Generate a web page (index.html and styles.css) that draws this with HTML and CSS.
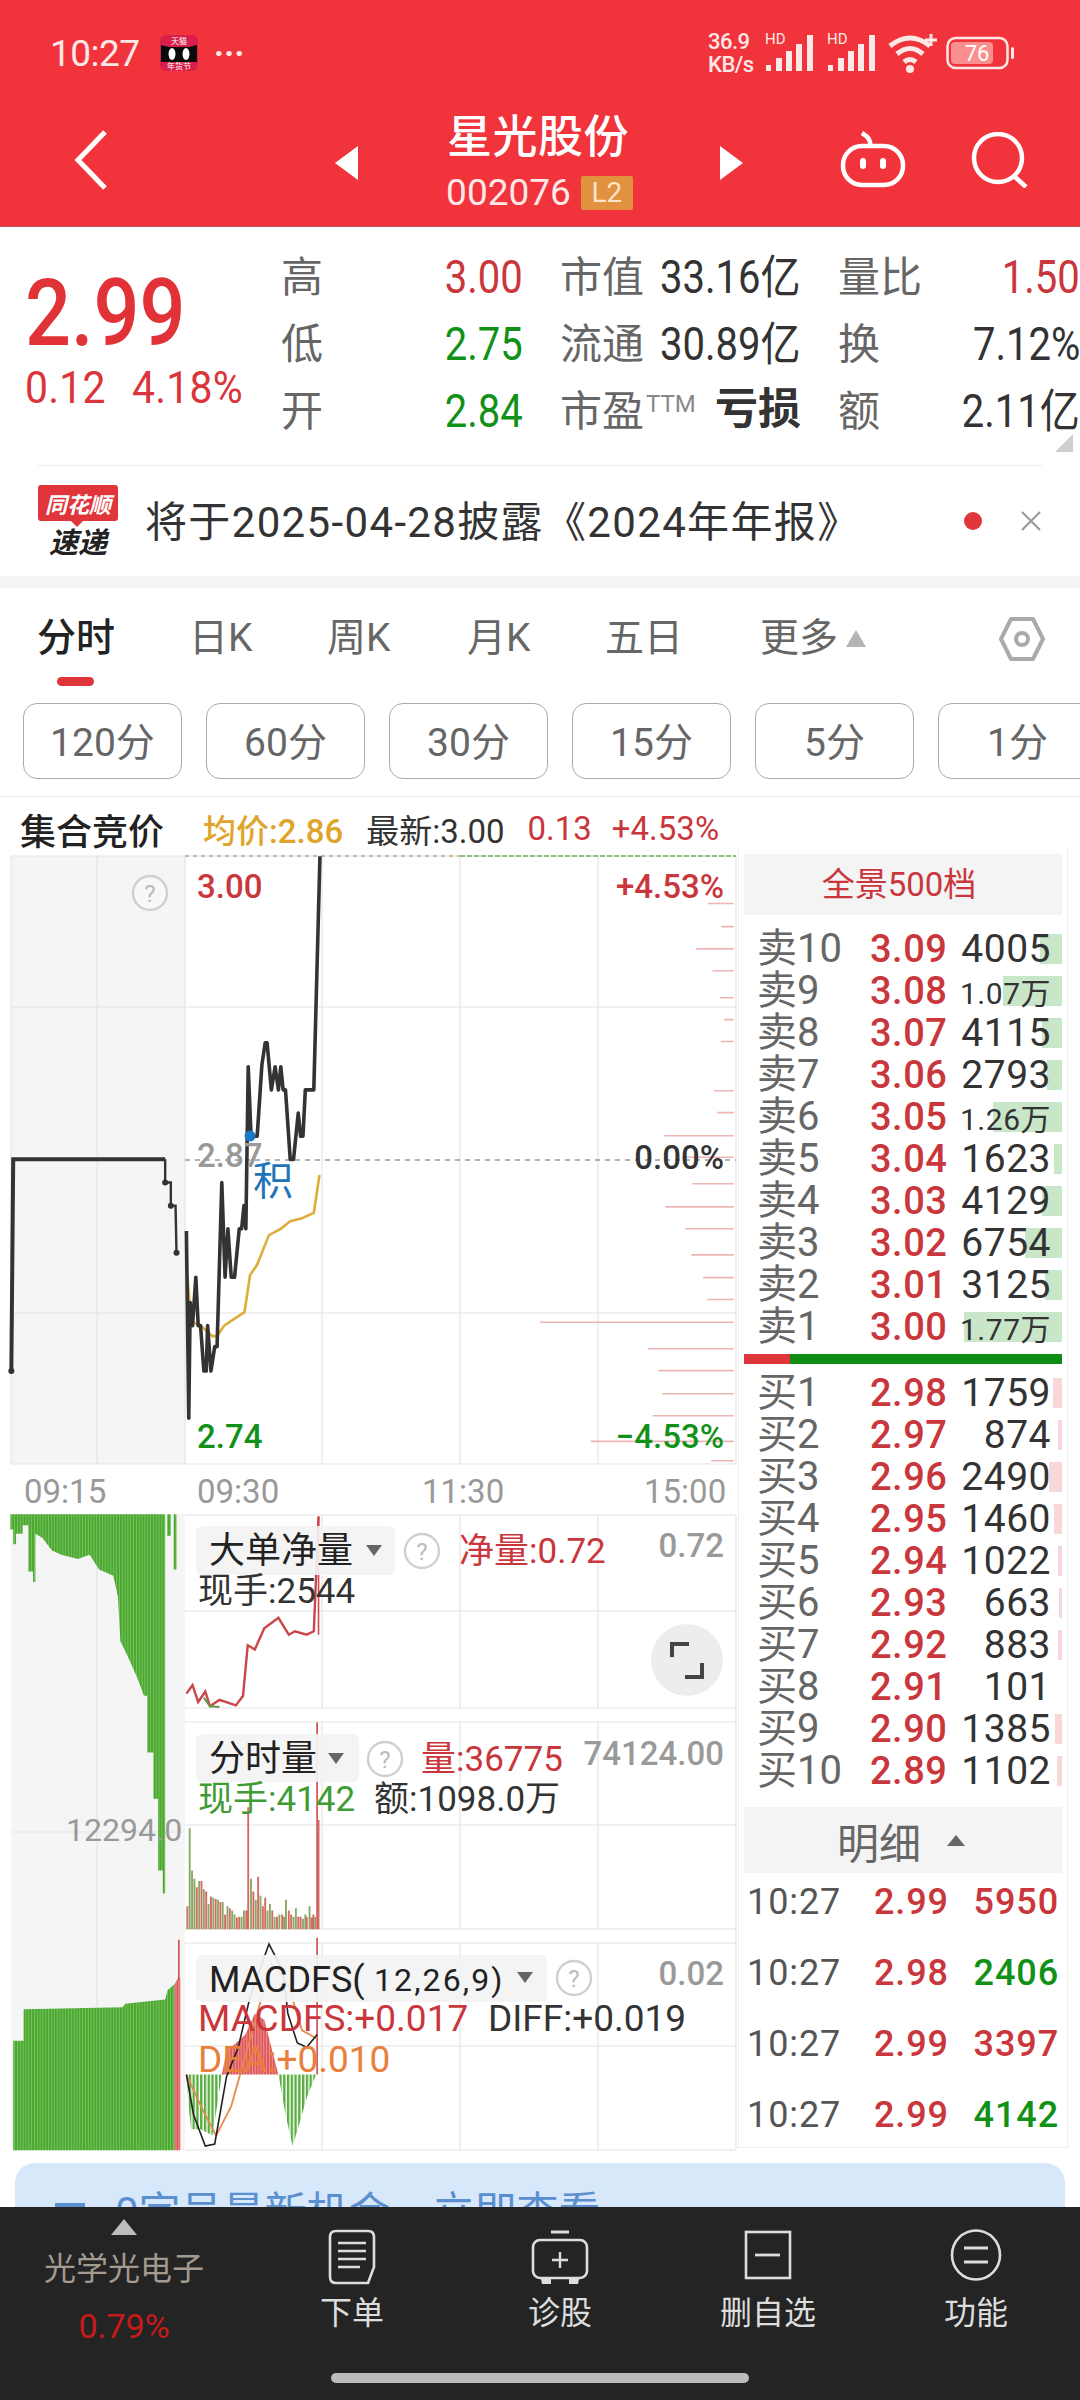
FILE: index.html
```html
<!DOCTYPE html>
<html lang="zh-CN">
<head>
<meta charset="utf-8">
<title>星光股份</title>
<link rel="stylesheet" href="styles.css">
</head>
<body>
<div class="page">
  <header class="top">
    <div class="status">
      <span class="clock">10:27</span>
      <svg class="tmall" viewBox="0 0 38 36">
        <rect width="38" height="36" rx="6" fill="#d81e4a"/>
        <text class="tm-t" x="19" y="9" text-anchor="middle">天猫</text>
        <path d="M1 10l8 2h20l8-2v17H1z" fill="#0a0a0a"/>
        <ellipse cx="12" cy="19" rx="3.5" ry="6" fill="#fff"/><ellipse cx="26" cy="19" rx="3.5" ry="6" fill="#fff"/>
        <text class="tm-t" x="19" y="34" text-anchor="middle">年货节</text>
      </svg>
      <span class="dots">···</span>
      <div class="status-right">
        <span class="speed">36.9<br>KB/s</span>
        <svg class="sig" viewBox="0 0 52 42"><text class="hd" x="1" y="12">HD</text><g fill="#fde8e8"><rect x="2" y="33" width="5" height="6"/><rect x="12" y="26" width="6" height="13"/><rect x="22" y="19" width="6" height="20"/><rect x="32" y="12" width="6" height="27"/><rect x="43" y="3" width="6" height="36"/></g></svg>
        <svg class="sig" viewBox="0 0 52 42"><text class="hd" x="1" y="12">HD</text><g fill="#fde8e8"><rect x="2" y="33" width="5" height="6"/><rect x="12" y="26" width="6" height="13"/><rect x="22" y="19" width="6" height="20"/><rect x="32" y="12" width="6" height="27"/><rect x="43" y="3" width="6" height="36"/></g></svg>
        <svg class="wifi" viewBox="0 0 50 42"><g fill="none" stroke="#fde8e8" stroke-width="5"><path d="M2 14q20-16 40 0"/><path d="M9 22q13-11 26 0"/><path d="M16 30q6-5 12 0"/></g><circle cx="22" cy="37" r="4" fill="#fde8e8"/><path d="M43 2v12M37 8h12" stroke="#fde8e8" stroke-width="3"/></svg>
        <svg class="batt" viewBox="0 0 70 36"><rect x="1.5" y="3" width="60" height="30" rx="8" fill="none" stroke="#fde8e8" stroke-width="2.5"/><rect x="5" y="7" width="42" height="22" rx="4" fill="#fb8f8f"/><rect x="65" y="12" width="3" height="12" rx="1.5" fill="#fde8e8"/><text class="batt-t" x="31" y="26" text-anchor="middle">76</text></svg>
      </div>
    </div>
    <nav class="nav">
      <svg class="back" viewBox="0 0 34 60"><path d="M31 2L4 30l27 28" fill="none" stroke="#fff" stroke-width="5"/></svg>
      <div class="switcher">
        <span class="tri-l"></span>
        <div class="title-box">
          <div class="title">星光股份</div>
          <div class="code"><span>002076</span><span class="l2">L2</span></div>
        </div>
        <span class="tri-r"></span>
      </div>
      <svg class="bot" viewBox="0 0 66 58"><g fill="none" stroke="#fff" stroke-width="4.5"><rect x="3" y="16" width="60" height="39" rx="19"/><path d="M30 16q2-7-8-13"/></g><rect x="20" y="28" width="6" height="11" rx="3" fill="#fff"/><rect x="40" y="28" width="6" height="11" rx="3" fill="#fff"/></svg>
      <svg class="search" viewBox="0 0 58 56"><circle cx="27" cy="26" r="24" fill="none" stroke="#fff" stroke-width="4.5"/><path d="M43 44l12 11" stroke="#fff" stroke-width="4.5"/></svg>
    </nav>
  </header>

  <section class="quote">
    <div class="price-box">
      <div class="price">2.99</div>
      <div class="change"><span>0.12</span><span>4.18%</span></div>
    </div>
    <div class="stat-grid">
      <div class="stat"><span class="lbl">高</span><span class="num red">3.00</span></div>
      <div class="stat"><span class="lbl">市值</span><span class="num">33.16亿</span></div>
      <div class="stat"><span class="lbl">量比</span><span class="num red">1.50</span></div>
      <div class="stat"><span class="lbl">低</span><span class="num green">2.75</span></div>
      <div class="stat"><span class="lbl">流通</span><span class="num">30.89亿</span></div>
      <div class="stat"><span class="lbl">换</span><span class="num">7.12%</span></div>
      <div class="stat"><span class="lbl">开</span><span class="num green">2.84</span></div>
      <div class="stat"><span class="lbl">市盈<sup class="ttm">TTM</sup></span><span class="bold">亏损</span></div>
      <div class="stat"><span class="lbl">额</span><span class="num">2.11亿</span></div>
    </div>
    <span class="corner"></span>
  </section>

  <section class="ticker">
    <div class="logo"><span class="logo-top">同花顺</span><span class="logo-bot">速递</span></div>
    <span class="ticker-text">将于2025-04-28披露《2024年年报》</span>
    <span class="dot"></span>
    <svg class="close" viewBox="0 0 22 22"><path d="M2 2l18 18M20 2L2 20" stroke="#999" stroke-width="2"/></svg>
  </section>
  <div class="band"></div>

  <section class="tabs">
    <span class="tab active">分时</span>
    <span class="tab">日K</span>
    <span class="tab">周K</span>
    <span class="tab">月K</span>
    <span class="tab">五日</span>
    <span class="tab more">更多<i class="up"></i></span>
    <svg class="hex" viewBox="0 0 46 46"><path d="M12 3h22l10 20-10 20H12L2 23z" fill="none" stroke="#aaa" stroke-width="4" stroke-linejoin="round"/><circle cx="23" cy="23" r="6" fill="none" stroke="#aaa" stroke-width="4"/></svg>
  </section>

  <section class="periods">
    <span class="chip">120分</span><span class="chip">60分</span><span class="chip">30分</span><span class="chip">15分</span><span class="chip">5分</span><span class="chip">1分</span>
  </section>

  <section class="info">
    <span class="info-title">集合竞价</span>
    <span class="gold">均价:2.86</span>
    <span class="dark">最新:3.00</span>
    <span class="red">0.13</span>
    <span class="red">+4.53%</span>
  </section>

  <section class="board">
    <div class="charts">
      <svg class="main-chart" viewBox="0 850 740 620">
        <defs>
          <pattern id="gs" width="6" height="10" patternUnits="userSpaceOnUse"><rect width="6" height="10" fill="#4aa82e"/><rect width="1.4" height="10" fill="#8fcf7c"/></pattern>
          <pattern id="gm" width="8" height="10" patternUnits="userSpaceOnUse"><rect width="8" height="10" fill="#fff"/><rect width="5" height="10" fill="#57ad3d"/></pattern>
          <pattern id="rs" width="6" height="10" patternUnits="userSpaceOnUse"><rect width="6" height="10" fill="#e0575a"/><rect width="1.4" height="10" fill="#f2b0b0"/></pattern>
        </defs>
        <rect class="pre" x="11" y="856" width="174" height="608"/>
        <path class="grid" d="M11 856H736M11 1007H736M11 1313H736M11 1464H736M11 856V1464M97 856V1464M185 856V1464M322 856V1464M460 856V1464M598 856V1464M736 856V1464"/>
        <path class="top-dash" d="M185 856H460"/><path class="top-dash-g" d="M460 856H736"/>
        <path class="mid-dash" d="M185 1160H736"/>
        <g transform="translate(0 850) scale(.4719 .4209)">
          <path class="vol" d="M1500 127H1555M1528 182H1555M1475 235H1555M1510 287H1555M1525 351H1555M1535 403H1555M1528 455H1555M1513 572H1555M1520 624H1555M1408 679H1555M1445 730H1555M1467 793H1555M1410 848H1555M1452 900H1555M1465 962H1555M1490 1016H1555M1498 1068H1555M1145 1122H1555M1373 1185H1555M1395 1237H1555M1403 1292H1555M1383 1344H1555M1252 1405H1555M1507 1451H1555"/>
          <polyline class="avg" points="397,1010 405,1120 425,1130 450,1155 460,1155 475,1130 495,1115 518,1098 530,1010 545,985 570,915 595,900 615,882 640,875 665,862 677,772"/>
          <polyline class="pre-line" points="24,1238 28,735 350,735"/>
          <polyline class="pre-line2" points="350,735 350,790 362,790 362,845 372,845 374,957"/>
          <path class="pre-dots" d="M24 1238h.1M374 957h.1M350 790h.1M362 845h.1"/>
          <polyline class="px" points="395,905 400,1350 403,1075 408,1130 415,1015 420,1130 425,1130 432,1238 437,1238 440,1130 447,1238 455,1180 460,1180 470,790 477,1015 483,900 490,1015 497,1015 507,900 512,900 517,845 521,900 526,515 532,680 545,680 555,510 562,458 566,458 575,570 583,515 590,570 595,515 600,570 605,570 615,735 622,735 627,680 632,625 637,680 642,680 647,570 665,570 678,15"/>
        </g>
        <circle class="qm-c" cx="150" cy="893" r="17"/><text class="qm" x="150" y="894">?</text>
        <circle class="blue-dot" cx="250" cy="1136" r="5.5"/>
        <text class="t-blue" x="253" y="1178">积</text>
        <text class="t-axis c-red" x="197" y="886">3.00</text>
        <text class="t-axis c-gray" x="197" y="1155">2.87</text>
        <text class="t-axis c-green" x="197" y="1436">2.74</text>
        <text class="t-axis c-red end" x="724" y="886">+4.53%</text>
        <text class="t-axis c-dark end" x="724" y="1157">0.00%</text>
        <text class="t-axis c-green end" x="724" y="1436">−4.53%</text>
      </svg>
      <div class="times"><span>09:15</span><span>09:30</span><span>11:30</span><span>15:00</span></div>
      <svg class="sub-chart" viewBox="0 1512 740 648">
        <rect class="pre" x="11" y="1514" width="174" height="636"/>
        <path class="grid" d="M185 1515H736M185 1611H736M185 1708H736M185 1722H736M185 1825H736M185 1929H736M185 1943H736M185 2046H736M185 2150H736M322 1515V1708M460 1515V1708M598 1515V1708M322 1722V1929M460 1722V1929M598 1722V1929M322 1943V2150M460 1943V2150M598 1943V2150M97 1514V2150M736 1515V2150M11 1832H185"/>
        <g transform="translate(0 1500) scale(.4719 .4209)">
          <polygon fill="url(#gs)" points="22,34 22,70 28,70 28,105 34,105 34,80 48,80 48,60 60,60 60,170 70,170 70,195 75,195 75,80 90,90 110,120 130,130 165,140 190,130 210,165 240,180 250,230 255,335 270,370 290,420 305,465 312,465 312,600 325,600 325,710 335,710 335,880 345,880 345,935 350,935 350,34"/>
          <polygon fill="url(#gs)" points="354,34 354,85 362,85 362,34"/>
          <polygon fill="url(#gs)" points="368,34 368,165 374,165 374,34"/>
          <polygon fill="url(#gs)" points="28,1545 28,1285 50,1285 50,1210 260,1205 265,1197 350,1187 355,1165 370,1150 370,1545"/>
          <polygon fill="url(#rs)" points="370,1545 370,1150 378,1135 382,1135 382,1545"/>
          <path class="red-thin" d="M379 1045V1140M675 38V320M672 528V1020M672 1040V1365"/>
          <polyline class="net-red" points="395,460 408,440 420,480 435,455 445,490 465,475 500,488 515,465 525,345 540,355 560,305 590,280 612,320 625,312 650,320 665,312 675,40"/>
          <polyline class="net-green" points="432,470 445,490 465,492"/>
          <path class="bar-g" d="M402 1020V780M407 1020V880M412 1020V900M422 1020V905M432 1020V925M442 1020V960M452 1020V945M462 1020V950M472 1020V955M482 1020V965M492 1020V975M497 1020V985M512 1020V990M517 1020V975M532 1020V900M542 1020V950M552 1020V940M567 1020V975M572 1020V960M582 1020V990M592 1020V985M602 1020V990M606 1020V950M622 1020V990M627 1020V970M642 1020V995M647 1020V985M656 1020V965M668 1020V990"/>
          <path class="bar-r" d="M397 1020V965M417 1020V920M427 1020V905M437 1020V930M447 1020V942M457 1020V948M467 1020V955M477 1020V985M487 1020V970M502 1020V992M507 1020V990M522 1020V975M526 1020V730M537 1020V930M547 1020V895M557 1020V965M562 1020V945M577 1020V975M587 1020V990M598 1020V985M612 1020V975M617 1020V985M632 1020V990M637 1020V990M650 1020V990M660 1020V992M664 1020V985M675 1020V760"/>
          <polygon fill="url(#gm)" points="395,1365 470,1365 460,1440 450,1510 425,1495 405,1495 398,1420"/>
          <polygon fill="url(#rs)" points="470,1365 480,1310 500,1290 520,1270 540,1220 560,1235 575,1300 590,1365"/>
          <polygon fill="url(#gm)" points="590,1365 670,1365 650,1420 635,1480 620,1535 605,1460"/>
          <polyline class="macd-o" points="395,1365 430,1450 458,1510 490,1440 520,1320 550,1200 575,1100 610,1150 640,1260 672,1280"/>
          <polyline class="macd-k" points="395,1365 410,1460 435,1535 455,1530 480,1370 505,1300 530,1180 570,1055 600,1120 610,1220 630,1290 650,1300 672,1270"/>
        </g>
        <text class="t-side" x="66" y="1830">12294.0</text>

        <rect class="pill" x="196" y="1526" width="199" height="49" rx="6"/>
        <text class="t-lab" x="209" y="1551">大单净量</text>
        <path class="caret" d="M366 1545h16l-8 11z"/>
        <circle class="qm-c" cx="422" cy="1551" r="17"/><text class="qm" x="422" y="1552">?</text>
        <text class="t-val c-red" x="459" y="1551">净量:0.72</text>
        <text class="t-axis c-gray end" x="724" y="1545">0.72</text>
        <text class="t-sm c-dark" x="198" y="1591">现手:2544</text>
        <ellipse class="fs-bg" cx="687" cy="1660" rx="36" ry="36"/>
        <path class="fs" d="M672 1657v-13h17M702 1663v14h-17"/>

        <rect class="pill" x="196" y="1734" width="163" height="48" rx="6"/>
        <text class="t-lab" x="209" y="1759">分时量</text>
        <path class="caret" d="M328 1753h16l-8 11z"/>
        <circle class="qm-c" cx="385" cy="1759" r="17"/><text class="qm" x="385" y="1760">?</text>
        <text class="t-val c-red" x="421" y="1759">量:36775</text>
        <text class="t-axis c-gray end" x="724" y="1753">74124.00</text>
        <text class="t-sm c-gr2" x="198" y="1799">现手:4142</text>
        <text class="t-sm c-dark" x="374" y="1799">额:1098.0万</text>

        <rect class="pill" x="196" y="1955" width="351" height="47" rx="6"/>
        <text class="t-lab" x="209" y="1980">MACDFS(</text>
        <text class="t-lab-s" x="374" y="1980">12,26,9)</text>
        <path class="caret" d="M517 1972h16l-8 11z"/>
        <circle class="qm-c" cx="574" cy="1978" r="17"/><text class="qm" x="574" y="1979">?</text>
        <text class="t-axis c-gray end" x="724" y="1973">0.02</text>
        <text class="t-md c-red" x="198" y="2018">MACDFS:+0.017</text>
        <text class="t-md c-dark" x="488" y="2018">DIFF:+0.019</text>
        <text class="t-md c-orange" x="198" y="2059">DEA:+0.010</text>
      </svg>
    </div>

    <aside class="book">
      <div class="book-head">全景500档</div>
      <div class="levels sell">
        <div class="lv"><span class="lv-l">卖10</span><span class="lv-p">3.09</span><span class="lv-q">4005</span><i class="b-g b22"></i></div>
        <div class="lv"><span class="lv-l">卖9</span><span class="lv-p">3.08</span><span class="lv-q small">1.07万</span><i class="b-g b59"></i></div>
        <div class="lv"><span class="lv-l">卖8</span><span class="lv-p">3.07</span><span class="lv-q">4115</span><i class="b-g b20"></i></div>
        <div class="lv"><span class="lv-l">卖7</span><span class="lv-p">3.06</span><span class="lv-q">2793</span><i class="b-g b15"></i></div>
        <div class="lv"><span class="lv-l">卖6</span><span class="lv-p">3.05</span><span class="lv-q small">1.26万</span><i class="b-g b69"></i></div>
        <div class="lv"><span class="lv-l">卖5</span><span class="lv-p">3.04</span><span class="lv-q">1623</span><i class="b-g b8"></i></div>
        <div class="lv"><span class="lv-l">卖4</span><span class="lv-p">3.03</span><span class="lv-q">4129</span><i class="b-g b20"></i></div>
        <div class="lv"><span class="lv-l">卖3</span><span class="lv-p">3.02</span><span class="lv-q">6754</span><i class="b-g b37"></i></div>
        <div class="lv"><span class="lv-l">卖2</span><span class="lv-p">3.01</span><span class="lv-q">3125</span><i class="b-g b17"></i></div>
        <div class="lv"><span class="lv-l">卖1</span><span class="lv-p">3.00</span><span class="lv-q small">1.77万</span><i class="b-g b98"></i></div>
      </div>
      <div class="ratio"><span class="ratio-r"></span></div>
      <div class="levels buy">
        <div class="lv"><span class="lv-l">买1</span><span class="lv-p">2.98</span><span class="lv-q">1759</span><i class="b-r b9"></i></div>
        <div class="lv"><span class="lv-l">买2</span><span class="lv-p">2.97</span><span class="lv-q">874</span><i class="b-r b4"></i></div>
        <div class="lv"><span class="lv-l">买3</span><span class="lv-p">2.96</span><span class="lv-q">2490</span><i class="b-r b13"></i></div>
        <div class="lv"><span class="lv-l">买4</span><span class="lv-p">2.95</span><span class="lv-q">1460</span><i class="b-r b8"></i></div>
        <div class="lv"><span class="lv-l">买5</span><span class="lv-p">2.94</span><span class="lv-q">1022</span><i class="b-r b4"></i></div>
        <div class="lv"><span class="lv-l">买6</span><span class="lv-p">2.93</span><span class="lv-q">663</span><i class="b-r b3"></i></div>
        <div class="lv"><span class="lv-l">买7</span><span class="lv-p">2.92</span><span class="lv-q">883</span><i class="b-r b4"></i></div>
        <div class="lv"><span class="lv-l">买8</span><span class="lv-p">2.91</span><span class="lv-q">101</span></div>
        <div class="lv"><span class="lv-l">买9</span><span class="lv-p">2.90</span><span class="lv-q">1385</span><i class="b-r b7"></i></div>
        <div class="lv"><span class="lv-l">买10</span><span class="lv-p">2.89</span><span class="lv-q">1102</span><i class="b-r b5"></i></div>
      </div>
      <div class="detail-head">明细<i class="up-d"></i></div>
      <div class="trades">
        <div class="tr"><span class="tr-t">10:27</span><span class="tr-p">2.99</span><span class="tr-q red">5950</span></div>
        <div class="tr"><span class="tr-t">10:27</span><span class="tr-p">2.98</span><span class="tr-q green">2406</span></div>
        <div class="tr"><span class="tr-t">10:27</span><span class="tr-p">2.99</span><span class="tr-q red">3397</span></div>
        <div class="tr"><span class="tr-t">10:27</span><span class="tr-p">2.99</span><span class="tr-q green">4142</span></div>
      </div>
    </aside>
  </section>

  <div class="promo-wrap">
    <div class="promo"><span class="promo-ic"></span><span class="promo-t">0字号最新机会，立即查看</span><span class="promo-go">››</span></div>
  </div>

  <footer class="foot">
    <div class="foot-sector">
      <i class="foot-up"></i>
      <span class="sector-name">光学光电子</span>
      <span class="sector-pct">0.79%</span>
    </div>
    <div class="foot-item">
      <svg class="fi" viewBox="0 0 48 56"><path d="M8 2h32q6 0 6 6v30l-6 16H8q-6 0-6-6V8q0-6 6-6z" fill="none" stroke="#ddd" stroke-width="2.6"/><path d="M10 14h28M10 22h28M10 30h28M10 38h22" stroke="#ddd" stroke-width="2.6"/></svg>
      <span>下单</span>
    </div>
    <div class="foot-item">
      <svg class="fi" viewBox="0 0 58 56"><path d="M20 3h18" stroke="#ddd" stroke-width="3"/><rect x="2" y="11" width="54" height="38" rx="7" fill="none" stroke="#ddd" stroke-width="2.6"/><path d="M29 23v16M21 31h16" stroke="#ddd" stroke-width="2.4"/><path d="M10 50h10v5H11zM38 50h10l-1 5h-9z" fill="#ddd"/></svg>
      <span>诊股</span>
    </div>
    <div class="foot-item">
      <svg class="fi" viewBox="0 0 48 56"><rect x="2" y="3" width="44" height="46" fill="none" stroke="#ddd" stroke-width="2.6"/><path d="M11 26h25" stroke="#ddd" stroke-width="2.8"/></svg>
      <span>删自选</span>
    </div>
    <div class="foot-item">
      <svg class="fi" viewBox="0 0 52 56"><ellipse cx="26" cy="26" rx="24" ry="24.5" fill="none" stroke="#ddd" stroke-width="2.6"/><path d="M14 19h24M14 33h24" stroke="#ddd" stroke-width="2.8"/></svg>
      <span>功能</span>
    </div>
    <span class="home"></span>
  </footer>
</div>
</body>
</html>
```
FILE: styles.css
```css
*{box-sizing:border-box}
html,body{margin:0;padding:0;background:#fff}
body{font-family:Roboto,"Noto Sans CJK SC",sans-serif;color:#333}
.page{width:1080px;height:2400px;overflow:hidden;position:relative;background:#fff}
i{font-style:normal;display:block}

.top{height:227px;background:#f1333b;border-bottom:1px solid #b9565a}
.status{height:106px;display:flex;align-items:center;padding:0 64px 0 50px;color:#fde8e8}
.clock{font-size:37px;letter-spacing:-.5px;margin-right:20px}
.tmall{width:38px;height:36px}
.tm-t{font-size:8px;fill:#fff;font-family:"Noto Sans CJK SC",sans-serif}
.dots{font-size:34px;font-weight:700;margin-left:16px;letter-spacing:0}
.status-right{margin-left:auto;display:flex;align-items:center;gap:4px}
.speed{font-size:22px;line-height:23px;font-weight:500;width:50px;text-align:left;letter-spacing:-.5px;margin-right:-4px}
.sig{width:52px;height:42px;margin-left:6px}
.hd{font-size:15px;fill:#fde8e8}
.wifi{width:50px;height:42px;margin-left:6px}
.batt{width:70px;height:36px;margin-left:4px}
.batt-t{font-size:22px;fill:#fff}

.nav{height:120px;display:flex;align-items:flex-start;position:relative}
.back{width:34px;height:60px;margin:24px 0 0 74px}
.switcher{width:408px;display:flex;align-items:center;margin-left:227px;justify-content:space-between;height:120px;padding-bottom:16px}
.tri-l{width:0;height:0;border:17px solid transparent;border-left:0;border-right:23px solid #fff;margin-top:10px}
.tri-r{width:0;height:0;border:17px solid transparent;border-right:0;border-left:23px solid #fff;margin-top:10px}
.title-box{display:flex;flex-direction:column;align-items:flex-start;margin:6px 0 0 2px}
.title{font-size:45px;line-height:54px;font-weight:500;color:#fff;letter-spacing:.5px}
.code{display:flex;align-items:center;font-size:37px;color:#fde8e8;margin-top:10px;line-height:36px;gap:10px;margin-left:-1px}
.l2{background:#e0923f;color:#fce5c8;font-size:28px;width:52px;height:34px;border-radius:2px;text-align:center;line-height:34px}
.bot{width:66px;height:58px;margin:24px 0 0 97px}
.search{width:58px;height:56px;margin:26px 0 0 65px}

.quote{height:239px;display:flex;position:relative}
.quote::after{content:"";position:absolute;left:38px;right:38px;bottom:0;height:1px;background:#ececec}
.price-box{width:281px;padding:42px 0 0 25px;color:#d9353a}
.price{font-size:92px;line-height:90px;font-weight:500;color:#e03237;transform:scaleX(.88);transform-origin:left center}
.change{display:flex;gap:28px;font-size:44px;line-height:46px;margin-top:6px;transform:scaleX(.93);transform-origin:left center;white-space:nowrap;letter-spacing:.3px}
.stat-grid{flex:1;display:grid;grid-template-columns:242px 241px 242px;column-gap:37px;grid-auto-rows:67px;padding-top:16px}
.stat{display:flex;justify-content:space-between;align-items:center}
.lbl{font-size:42px;color:#666;white-space:nowrap;padding-bottom:6px}
.ttm{font-size:24px;color:#888;vertical-align:14px;line-height:0;margin-left:2px}
.num{font-size:46px;line-height:50px;color:#333;white-space:nowrap;display:inline-block;margin-left:-30px;transform:scaleX(.87);transform-origin:right center}
.bold{font-size:43px;line-height:50px;font-weight:700;color:#333;white-space:nowrap;padding-bottom:4px}
.red{color:#c9363b}
.green{color:#129118}
.corner{position:absolute;right:7px;bottom:14px;width:0;height:0;border-style:solid;border-width:0 0 18px 18px;border-color:transparent transparent #cfcfcf transparent}

.ticker{height:110px;display:flex;align-items:center;padding-left:38px;position:relative}
.logo{width:80px;height:72px;display:flex;flex-direction:column;align-items:center;font-family:"Noto Sans CJK SC",sans-serif;font-style:italic;font-weight:700;position:relative}
.logo::after{content:"";position:absolute;left:32px;top:35px;width:0;height:0;border:7px solid transparent;border-top:7px solid #e0353a;border-bottom:0}
.logo-top{width:80px;height:36px;background:#e0353a;color:#fff;font-size:22px;line-height:36px;border-radius:3px;text-align:center}
.logo-bot{font-size:29px;line-height:34px;color:#222;margin-top:2px}
.ticker-text{font-size:42px;color:#333;margin-left:27px;white-space:nowrap;letter-spacing:1.35px;padding-bottom:6px}
.dot{width:18px;height:18px;border-radius:50%;background:#e0353a;position:absolute;left:964px;top:46px}
.close{width:22px;height:22px;position:absolute;left:1020px;top:44px}
.band{height:12px;background:#f5f5f5}

.tabs{height:109px;display:flex;position:relative;padding-top:26px;font-size:39px;color:#666}
.tab{position:absolute;top:27px;line-height:46px;white-space:nowrap}
.tab:nth-child(1){left:37px}
.tab:nth-child(2){left:189px}
.tab:nth-child(3){left:327px}
.tab:nth-child(4){left:467px}
.tab:nth-child(5){left:605px}
.tab:nth-child(6){left:760px}
.tab.active{color:#222;font-weight:500}
.tab.active::after{content:"";position:absolute;left:20px;top:62px;width:37px;height:9px;border-radius:5px;background:#e0353a}
.more{display:flex;align-items:center}
.up{width:0;height:0;border:10px solid transparent;border-top:0;border-bottom:17px solid #b5b5b5;margin-left:8px}
.hex{width:46px;height:46px;position:absolute;left:999px;top:28px}

.periods{height:100px;display:flex;gap:24px;padding:6px 0 0 23px;overflow:hidden;border-bottom:1px solid #ececec}
.chip{flex:0 0 159px;height:76px;border:1px solid #aaa;border-radius:14px;font-size:39px;color:#666;display:flex;align-items:center;justify-content:center;padding-bottom:5px}

.info{height:53px;display:flex;align-items:center;padding:10px 0 0 20px;font-size:33px;white-space:nowrap}
.info span{margin-right:23px}
.info span:nth-child(4){margin-right:20px}
.info .info-title{font-size:36px;font-weight:500;color:#222;margin-right:39px}
.gold{color:#dfa42b;font-weight:500}
.dark{color:#333}

.board{display:flex;height:1302px}
.charts{width:738px;flex:none;display:flex;flex-direction:column;overflow:hidden}
.main-chart{width:740px;height:620px;flex:none;display:block}
.sub-chart{width:740px;height:648px;flex:none;display:block}
.times{height:42px;flex:none;display:flex;align-items:center;font-size:33px;color:#999;padding-left:24px}
.times span:nth-child(1){width:173px}
.times span:nth-child(2){width:225px}
.times span:nth-child(3){width:222px}

.pre{fill:#f5f5f5}
.grid{fill:none;stroke:#e4e4e4;stroke-width:1.2}
.top-dash{stroke:#b8a88a;stroke-width:1.5;stroke-dasharray:4 4;fill:none}
.top-dash-g{stroke:#8cc47a;stroke-width:2;stroke-dasharray:5 2;fill:none}
.mid-dash{stroke:#999;stroke-width:1.5;stroke-dasharray:5 5;fill:none}
.vol{stroke:#eeb5b5;stroke-width:1.6;fill:none;vector-effect:non-scaling-stroke}
.avg{fill:none;stroke:#dcae3a;stroke-width:2.6;vector-effect:non-scaling-stroke}
.px{fill:none;stroke:#333;stroke-width:3.6;stroke-linejoin:round;vector-effect:non-scaling-stroke}
.pre-line{fill:none;stroke:#333;stroke-width:4;vector-effect:non-scaling-stroke}
.pre-line2{fill:none;stroke:#333;stroke-width:2.4;vector-effect:non-scaling-stroke}
.pre-dots{fill:none;stroke:#333;stroke-width:6;stroke-linecap:round;vector-effect:non-scaling-stroke}
.red-thin{stroke:#d24a4a;stroke-width:1.6;fill:none;vector-effect:non-scaling-stroke}
.net-red{fill:none;stroke:#c9474a;stroke-width:2.4;vector-effect:non-scaling-stroke}
.net-green{fill:none;stroke:#5a9a45;stroke-width:2;vector-effect:non-scaling-stroke}
.bar-g{stroke:#8aa866;stroke-width:1.9;fill:none;vector-effect:non-scaling-stroke}
.bar-r{stroke:#d56a64;stroke-width:1.9;fill:none;vector-effect:non-scaling-stroke}
.macd-k{fill:none;stroke:#222;stroke-width:1.6;vector-effect:non-scaling-stroke}
.macd-o{fill:none;stroke:#e58a4a;stroke-width:1.8;vector-effect:non-scaling-stroke}
.qm-c{fill:#fff;fill-opacity:.3;stroke:#cfcfcf;stroke-width:2.4}
.qm{font-size:24px;fill:#bbb;text-anchor:middle;dominant-baseline:central}
.blue-dot{fill:#1a78c8}
.t-blue{font-size:40px;fill:#1f73b7;dominant-baseline:central;font-family:"Noto Sans CJK SC",sans-serif}
.t-axis{font-size:33px;font-weight:500;dominant-baseline:central}
.t-axis.end{text-anchor:end}
.c-red{fill:#c9363b}
.c-green{fill:#129118}
.c-gr2{fill:#3f9b34}
.c-gray{fill:#999}
.c-dark{fill:#333}
.c-orange{fill:#e87f3c}
.t-side{font-size:32px;fill:#999;dominant-baseline:central}
.pill{fill:#f3f3f3;fill-opacity:.92}
.t-lab{font-size:36px;fill:#222;dominant-baseline:central}
.t-lab-s{font-size:32px;fill:#222;dominant-baseline:central;letter-spacing:2.1px}
.t-val{font-size:35px;dominant-baseline:central}
.t-sm{font-size:35px;dominant-baseline:central}
.t-md{font-size:37px;dominant-baseline:central}
.caret{fill:#666}
.fs-bg{fill:#ededed}
.fs{fill:none;stroke:#444;stroke-width:4}

.book{width:330px;height:1298px;flex:none;margin-left:0;padding:4px 5px 0;border:1px solid #eee;border-top:0;position:relative}
.book-head{height:61px;background:#f4f4f4;color:#c9363b;font-size:33px;display:flex;align-items:center;justify-content:center;padding:0 8px 5px 0}
.levels{display:flex;flex-direction:column}
.sell{padding-top:13px}
.lv{height:42px;display:flex;align-items:center;position:relative;padding-left:13px;white-space:nowrap}
.lv-l{width:113px;font-size:40px;color:#666;position:relative;line-height:42px}
.lv-p{font-size:38px;color:#c9363b;font-weight:500;width:80px;position:relative;letter-spacing:.5px}
.lv-q{position:absolute;right:11px;font-size:39px;color:#333;z-index:1;letter-spacing:.5px}
.lv-q.small{font-size:30px}
.lv i{position:absolute;right:0;top:6px;height:30px}
.b-g{background:#c9e6c9}
.b-r{background:#f8d7da}
.b3{width:3px}.b4{width:4px}.b5{width:5px}.b7{width:7px}.b8{width:8px}.b9{width:9px}.b13{width:13px}.b15{width:15px}.b17{width:17px}.b20{width:20px}.b22{width:22px}.b37{width:37px}.b59{width:59px}.b69{width:69px}.b98{width:98px}
.ratio{height:10px;background:#0e8c14;margin:6px 0 8px}
.ratio-r{display:block;width:46px;height:10px;background:#e0353a}
.detail-head{height:66px;background:#f4f4f4;margin-top:15px;color:#666;font-size:42px;display:flex;align-items:center;padding-left:93px}
.up-d{width:0;height:0;border:9px solid transparent;border-top:0;border-bottom:11px solid #666;margin-left:26px}
.trades{display:flex;flex-direction:column;margin-top:-7px}
.tr{height:71px;display:flex;align-items:center;font-size:36px;position:relative;letter-spacing:.9px}
.tr-t{color:#555;width:130px;padding-left:3px}
.tr-p{color:#c9363b;font-weight:500}
.tr-q{position:absolute;right:3px;font-weight:500}

.promo-wrap{height:55px;overflow:hidden;padding:11px 15px 0;background:#fff}
.promo{height:120px;background:#d8e8fb;border-radius:20px;display:flex;align-items:flex-start;padding:26px 40px 0;color:#5b8fd0;font-size:42px;line-height:48px}
.promo-ic{width:30px;height:22px;background:#5b8fd0;margin-top:14px;margin-right:30px}
.promo-go{margin-left:auto}

.foot{height:193px;background:#242424;position:relative;display:flex;color:#ddd}
.foot-sector{width:248px;display:flex;flex-direction:column;align-items:center}
.foot-up{width:0;height:0;border:13px solid transparent;border-top:0;border-bottom:16px solid #bdbdbd;margin-top:12px}
.sector-name{font-size:32px;color:#a39a90;margin-top:14px;line-height:40px}
.sector-pct{font-size:34px;color:#c91a1a;margin-top:17px;line-height:40px}
.foot-item{width:208px;display:flex;flex-direction:column;align-items:center;font-size:32px;line-height:40px;padding-top:22px}
.fi{height:56px;width:58px;margin-bottom:8px}
.foot-item:nth-child(2){margin-left:0}
.home{position:absolute;left:331px;top:166px;width:418px;height:10px;border-radius:5px;background:#bbb}
```
